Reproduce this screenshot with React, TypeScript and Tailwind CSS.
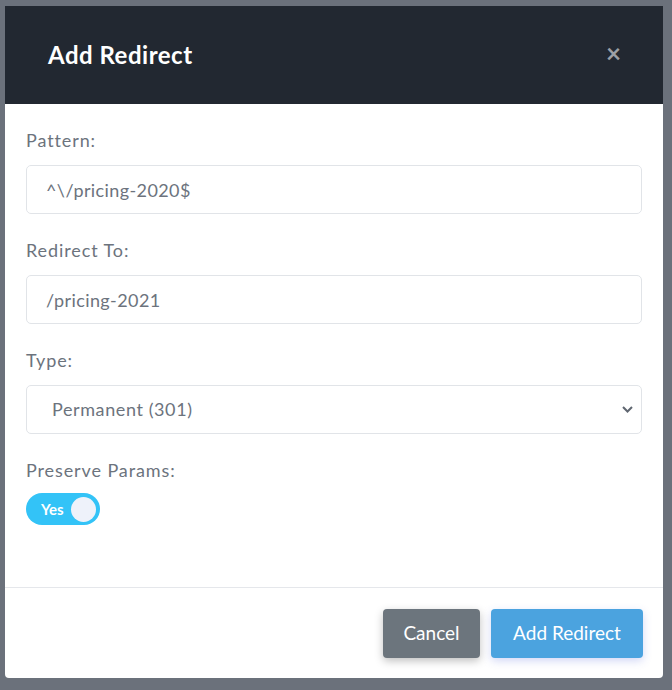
import { useState } from 'react';

const font = { fontFamily: 'Lato, "Noto Sans", sans-serif' };

function Field({ label, children }: { label: string; children: React.ReactNode }) {
  return (
    <div className="flex flex-col">
      <label className="text-[18px] leading-[27px] mb-[11px] tracking-[0.9px] text-[#6c737d]">{label}</label>
      {children}
    </div>
  );
}

export default function App() {
  const [pattern, setPattern] = useState('^\\/pricing-2020$');
  const [target, setTarget] = useState('/pricing-2021');
  const [type, setType] = useState('301');
  const [preserve, setPreserve] = useState(true);

  return (
    <div className="min-h-[690px] bg-[#6b717b] pt-[6px] pl-[5px]" style={font}>
      <div className="w-[658px] h-[672px] bg-white rounded-b-[4px] flex flex-col overflow-hidden">
        <div className="h-[98px] bg-[#222831] flex items-center justify-between pl-[43px] pr-[42px]">
          <h2 className="text-[24px] font-bold text-white tracking-[0.5px]">Add Redirect</h2>
          <button className="text-[#9ca0a6] text-[26px] leading-none font-bold -mt-[4px]">×</button>
        </div>

        <div className="flex-1 px-[21px] pt-[23px] flex flex-col gap-[23px]">
          <Field label="Pattern:">
            <input
              value={pattern}
              onChange={(e) => setPattern(e.target.value)}
              className="h-[49px] border border-[#e1e4e8] rounded-[5px] px-[19px] text-[18px] tracking-[0.4px] text-[#6c737d] outline-none"
            />
          </Field>
          <Field label="Redirect To:">
            <input
              value={target}
              onChange={(e) => setTarget(e.target.value)}
              className="h-[49px] border border-[#e1e4e8] rounded-[5px] px-[19px] text-[18px] tracking-[0.4px] text-[#6c737d] outline-none"
            />
          </Field>
          <Field label="Type:">
            <div className="relative">
              <select
                value={type}
                onChange={(e) => setType(e.target.value)}
                className="w-full h-[49px] appearance-none bg-white border border-[#e1e4e8] rounded-[5px] pl-[25px] text-[18px] tracking-[0.6px] text-[#6c737d] outline-none"
              >
                <option value="301">Permanent (301)</option>
                <option value="302">Temporary (302)</option>
              </select>
              <svg
                className="absolute right-[8px] top-[19px] pointer-events-none"
                width="13"
                height="10"
                viewBox="0 0 13 10"
              >
                <path d="M2 3l4.5 4.5L11 3" fill="none" stroke="#5f6670" strokeWidth="2" />
              </svg>
            </div>
          </Field>
          <Field label="Preserve Params:">
            <button
              onClick={() => setPreserve(!preserve)}
              className="w-[74px] h-[32px] rounded-full bg-[#33c3f7] flex items-center justify-between pl-[15px] pr-[4px] -mt-[2px]"
            >
              <span className="text-white text-[15px] font-bold">{preserve ? 'Yes' : 'No'}</span>
              <span className="w-[25px] h-[25px] rounded-full bg-[#eef2fa]" />
            </button>
          </Field>
        </div>

        <div className="h-[91px] border-t border-[#e5e7eb] flex justify-end items-start gap-[11px] pt-[21px] pr-[20px]">
          <button className="h-[49px] w-[97px] rounded-[4px] bg-[#6c757d] text-white text-[19px] shadow-[0_3px_8px_rgba(0,0,0,0.25)]">
            Cancel
          </button>
          <button className="h-[49px] w-[152px] rounded-[4px] bg-[#4ba3df] text-white text-[19px] shadow-[0_3px_8px_rgba(80,100,220,0.25)]">
            Add Redirect
          </button>
        </div>
      </div>
    </div>
  );
}
